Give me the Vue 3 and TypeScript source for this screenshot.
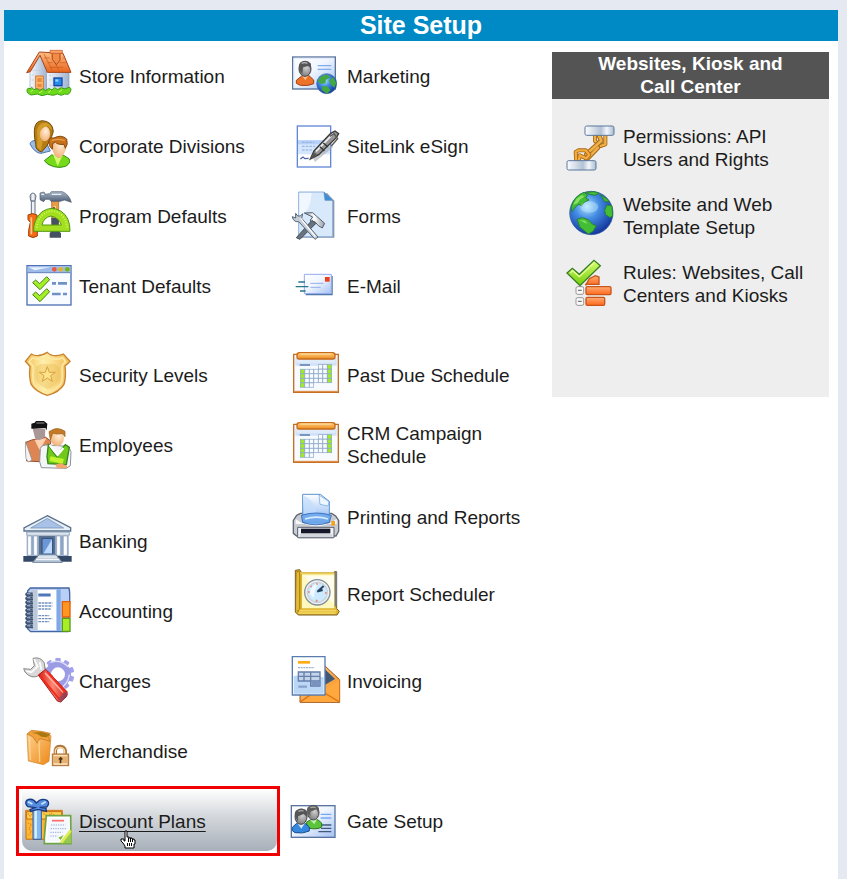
<script setup lang="ts">
interface Item {
  label: string
  icon: string
  active?: boolean
}

interface Group {
  space: 'none' | 'xs' | 'sm' | 'md' | 'lg' | 'xl' | 'xxl'
  items: Item[]
}

const columns: Group[][] = [
  [
    {
      space: 'none',
      items: [
        { label: 'Store Information', icon: 'house' },
        { label: 'Corporate Divisions', icon: 'divisions' },
        { label: 'Program Defaults', icon: 'tools' },
        { label: 'Tenant Defaults', icon: 'checklist' },
      ],
    },
    {
      space: 'md',
      items: [
        { label: 'Security Levels', icon: 'shield' },
        { label: 'Employees', icon: 'employees' },
      ],
    },
    {
      space: 'xl',
      items: [
        { label: 'Banking', icon: 'bank' },
        { label: 'Accounting', icon: 'ledger' },
        { label: 'Charges', icon: 'wrench' },
        { label: 'Merchandise', icon: 'bag' },
        { label: 'Discount Plans', icon: 'gift', active: true },
      ],
    },
  ],
  [
    {
      space: 'none',
      items: [
        { label: 'Marketing', icon: 'card' },
        { label: 'SiteLink eSign', icon: 'sign' },
        { label: 'Forms', icon: 'forms' },
        { label: 'E-Mail', icon: 'mail' },
      ],
    },
    {
      space: 'md',
      items: [
        { label: 'Past Due Schedule', icon: 'calendar' },
        { label: 'CRM Campaign Schedule', icon: 'calendar' },
      ],
    },
    { space: 'xs', items: [{ label: 'Printing and Reports', icon: 'printer' }] },
    { space: 'sm', items: [{ label: 'Report Scheduler', icon: 'clock' }] },
    { space: 'lg', items: [{ label: 'Invoicing', icon: 'invoice' }] },
    { space: 'xxl', items: [{ label: 'Gate Setup', icon: 'gate' }] },
  ],
]

const webItems: Item[] = [
  { label: 'Permissions: API Users and Rights', icon: 'chain' },
  { label: 'Website and Web Template Setup', icon: 'globe' },
  { label: 'Rules: Websites, Call Centers and Kiosks', icon: 'rules' },
]

const dayColumns = [0, 1, 2, 3, 4, 5, 6]
const calendarCells = [0, 1, 2, 3, 4].flatMap((row) =>
  dayColumns
    .filter((col) => (row === 0 ? col > 3 : row === 4 ? col < 3 : true))
    .map((col) => ({
      x: 91 + col * 13.5,
      y: 104 + row * 13.7,
      weekend: (col === 0 && row > 0) || col === 6,
    })),
)
const gearTeeth = [0, 36, 72, 108, 144, 180, 216, 252, 288, 324]
const rings = [280, 292, 304, 316, 328, 340, 352, 364, 376]
</script>

<template>
  <div class="page">
    <svg class="sprite" aria-hidden="true">
      <defs>
        <linearGradient id="roof" x1="0" y1="0" x2="0" y2="1"><stop offset="0" stop-color="#ffbd83" /><stop offset="1" stop-color="#e8641b" /></linearGradient>
        <linearGradient id="wall" x1="0" y1="0" x2="1" y2="0"><stop offset="0" stop-color="#f5f8fc" /><stop offset="1" stop-color="#9fb3d0" /></linearGradient>
        <linearGradient id="paper" x1="0" y1="0" x2="1" y2="1"><stop offset="0" stop-color="#ffffff" /><stop offset=".45" stop-color="#f1f6ff" /><stop offset="1" stop-color="#a5c2f3" /></linearGradient>
        <linearGradient id="gold" x1="0" y1="0" x2="1" y2="0"><stop offset="0" stop-color="#f1bd55" /><stop offset=".4" stop-color="#fff0ae" /><stop offset="1" stop-color="#f2bc55" /></linearGradient>
        <linearGradient id="orange" x1="0" y1="0" x2="1" y2="1"><stop offset="0" stop-color="#ffd391" /><stop offset="1" stop-color="#ee8715" /></linearGradient>
        <linearGradient id="steel" x1="0" y1="0" x2="0" y2="1"><stop offset="0" stop-color="#a9b6c7" /><stop offset="1" stop-color="#4b5a72" /></linearGradient>
        <linearGradient id="silver" x1="0" y1="0" x2="1" y2="0"><stop offset="0" stop-color="#9aa3ad" /><stop offset=".5" stop-color="#ffffff" /><stop offset="1" stop-color="#9298a1" /></linearGradient>
        <linearGradient id="lime" x1="0" y1="0" x2="0" y2="1"><stop offset="0" stop-color="#d9ff72" /><stop offset="1" stop-color="#70cc08" /></linearGradient>
        <linearGradient id="red" x1="0" y1="0" x2="1" y2="0"><stop offset="0" stop-color="#d61d16" /><stop offset=".5" stop-color="#ff8872" /><stop offset="1" stop-color="#cd1710" /></linearGradient>
        <linearGradient id="bar" x1="0" y1="0" x2="1" y2="0"><stop offset="0" stop-color="#fdfefe" /><stop offset=".55" stop-color="#b2c2d6" /><stop offset=".75" stop-color="#f3f7fb" /><stop offset="1" stop-color="#a9bbd1" /></linearGradient>
        <linearGradient id="sky" x1="0" y1="0" x2="0" y2="1"><stop offset="0" stop-color="#ffffff" /><stop offset="1" stop-color="#86b4f2" /></linearGradient>
        <linearGradient id="tile" x1="0" y1="0" x2="0" y2="1"><stop offset="0" stop-color="#ffae75" /><stop offset="1" stop-color="#ff671c" /></linearGradient>
        <linearGradient id="clip" x1="0" y1="0" x2="0" y2="1"><stop offset="0" stop-color="#ffd07f" /><stop offset="1" stop-color="#ed8b20" /></linearGradient>
        <radialGradient id="ocean" cx=".4" cy=".35" r=".7"><stop offset="0" stop-color="#b7e5ff" /><stop offset=".4" stop-color="#438de4" /><stop offset="1" stop-color="#102f96" /></radialGradient>
        <radialGradient id="skin" cx=".6" cy=".35" r=".7"><stop offset="0" stop-color="#fff0d8" /><stop offset="1" stop-color="#f1ac72" /></radialGradient>
        <radialGradient id="grey" cx=".6" cy=".4" r=".7"><stop offset="0" stop-color="#d2d2d2" /><stop offset="1" stop-color="#727272" /></radialGradient>
      </defs>

      <symbol id="house" viewBox="69 156 144 144">
        <path d="M90 212 120 163 141 212V272L90 268Z" fill="url(#wall)" stroke="#95a9c4" stroke-width="2" />
        <path d="M139 216H207V264L140 272Z" fill="url(#wall)" stroke="#8296b7" stroke-width="2" />
        <path d="M97 211H131M95 225H106M131 220H139M95 240H104M131 240H139M147 226H158M190 225H204M147 240H158M190 248H204M148 256H185" stroke="#b7c6da" stroke-width="2" stroke-dasharray="6 3" />
        <path d="M118 156 189 160 213 217H142L120 166 91 215 80 218Z" fill="url(#roof)" stroke="#a84318" stroke-width="3" stroke-linejoin="round" />
        <path d="M132 174H149M143 188H158M149 202H190M188 174H195M179 188H199M132 162 158 214M166 188 178 215" stroke="#c85b22" stroke-width="2" />
        <path d="M156 158H180V181L169 194 157 178Z" fill="#f28b45" stroke="#a9481b" stroke-width="3" />
        <path d="M150 151H187V160H150Z" fill="#ff9f60" stroke="#b55325" stroke-width="2" />
        <path d="M107 228H130V269L107 266Z" fill="#ffb872" stroke="#d6752b" stroke-width="3" />
        <path d="M112 234H125V246H112ZM112 251H125V262H112Z" fill="#e88a3b" />
        <rect x="162" y="234" width="24" height="23" fill="#258bef" stroke="#1746a3" stroke-width="4" />
        <path d="M166 238H175V245H166Z" fill="#8dd8ff" />
        <path d="M81 271Q82 261 91 267L95 262 102 269 111 266 119 272 128 266 137 272 146 265 156 270 164 263 173 269 184 263 195 267 207 262Q216 264 211 275 207 286 194 282L184 286 172 282 160 286 142 283 126 287 112 282 94 285Q81 282 81 271Z" fill="#6cda1b" stroke="#3e9b16" stroke-width="3" />
        <path d="M92 275 100 270M117 279 127 273M145 278 153 271M176 276 186 270" stroke="#c1fa66" stroke-width="3" />
      </symbol>

      <symbol id="divisions" viewBox="69 366 144 144">
        <path d="M90 432Q91 423 106 421L140 430 151 453 123 460Q105 460 90 432Z" fill="#9bbce6" stroke="#4f76ad" stroke-width="3" />
        <path d="M118 364Q104 369 103 392 102 410 107 433 106 451 125 456L141 437 155 410 160 394Q157 364 127 362Z" fill="#b57c13" stroke="#704b0b" stroke-width="3" />
        <ellipse cx="134" cy="401" rx="16" ry="23" fill="url(#skin)" />
        <path d="M118 403Q122 382 143 378L156 391Q155 371 135 368 116 369 111 391 114 416 111 441L123 452 128 422Q120 417 118 403Z" fill="#d39b27" />
        <path d="M133 482 156 464 173 477 189 465 207 476Q214 489 197 499 181 505 161 500Q141 494 133 482Z" fill="#77d91c" stroke="#358f13" stroke-width="3" />
        <path d="M159 463 173 498 189 463Z" fill="#d3fb6d" />
        <path d="M156 440Q153 412 174 409 202 414 198 448 189 472 176 475 160 469 156 440Z" fill="url(#skin)" />
        <path d="M150 440Q143 422 151 414L162 414Q184 402 200 417 205 434 196 445L192 433Q172 435 166 426L158 431 157 448Z" fill="#c6711b" stroke="#874a10" stroke-width="3" />
        <path d="M155 421Q173 415 194 421" stroke="#efac51" stroke-width="3" fill="none" />
      </symbol>

      <symbol id="tools" viewBox="69 36 144 144">
        <path d="M94 63H105V104H94Z" fill="#eef2f6" stroke="#637185" stroke-width="3" />
        <path d="M92 62 90 48Q92 39 99 39 107 41 108 49L105 63Z" fill="url(#silver)" stroke="#68778b" stroke-width="3" />
        <path d="M84 105Q97 96 111 105V119L107 126 112 153V168Q99 177 86 168V151L91 127 84 119Z" fill="#f36c15" stroke="#a23f08" stroke-width="3" />
        <path d="M94 112V163" stroke="#ffc68c" stroke-width="5" />
        <path d="M155 60H176V155H155Z" fill="#e69b44" stroke="#9f5d20" stroke-width="2" />
        <path d="M154 114H177L175 151 183 160V173H149V160L156 150Z" fill="#465063" />
        <path d="M160 80H166V113" stroke="#ffd08a" stroke-width="4" />
        <path d="M120 39 132 36 136 43 149 41 154 35H187Q207 43 214 67L193 60 181 64H153L148 58 136 58 131 65 120 59Z" fill="url(#steel)" stroke="#4b596e" stroke-width="2" />
        <path d="M124 43H132M155 43H184" stroke="#e7eff7" stroke-width="4" />
        <path fill-rule="evenodd" d="M101 154Q99 119 125 96 153 76 182 93 211 111 210 154ZM126 135Q131 112 153 108 177 113 184 135Z" fill="#a3df20" stroke="#539714" stroke-width="3" />
        <path d="M110 143Q116 97 157 93 195 98 202 142" fill="none" stroke="#d9ff60" stroke-width="5" stroke-dasharray="3 5" />
      </symbol>

      <symbol id="checklist" viewBox="69 246 144 144">
        <rect x="81" y="257" width="132" height="118" fill="#f8fbff" stroke="#4f71b5" stroke-width="4" />
        <path d="M83 259H211V276H83Z" fill="#9dbbe8" />
        <path d="M86 262H151L104 271Z" fill="#e8f3ff" />
        <path d="M83 278H211" stroke="#587ab7" stroke-width="3" />
        <circle cx="163" cy="268" r="7" fill="#ee583b" /><circle cx="182" cy="268" r="7" fill="#e2b321" /><circle cx="202" cy="268" r="7" fill="#74b60d" />
        <g fill="#a1f126" stroke="#517c1b" stroke-width="3"><path d="M98 308 107 300 119 311 140 290 149 299 120 329Z" /><path d="M98 344 107 336 119 347 140 326 149 335 120 365Z" /></g>
        <path d="M156 310H168M174 310H201M156 342H182M189 342H201" stroke="#6f91c6" stroke-width="8" />
      </symbol>

      <symbol id="shield" viewBox="69 63 144 144">
        <path d="M142 67Q152 78 169 77 183 76 190 72L210 94Q205 100 195 108 199 140 192 163 179 186 142 196 106 185 94 164 86 142 90 110 83 101 76 94L94 72Q114 84 142 67Z" fill="url(#gold)" stroke="#c9822d" stroke-width="4" />
        <path d="M142 82Q160 92 189 84L197 96Q185 103 186 116 189 145 184 159 172 178 142 187 112 178 102 160 96 145 100 116 99 103 87 96L97 84Q125 92 142 82Z" fill="none" stroke="#ffe8a1" stroke-width="5" />
        <path d="M107 111Q122 98 142 103 164 98 180 111V147Q164 171 142 177 117 169 107 147Z" fill="#e9b84b" opacity=".35" />
        <path d="M142 110 148 127 166 127 152 137 157 154 142 144 127 154 132 137 118 127 136 127Z" fill="#ffe28a" stroke="#d7a340" stroke-width="3" />
      </symbol>

      <symbol id="employees" viewBox="69 273 144 144">
        <path d="M78 337 95 330 136 321 153 334 139 396 80 393Z" fill="#dd8553" stroke="#985030" stroke-width="3" />
        <path d="M77 335Q75 350 78 386L85 396 96 390Z" fill="#f3f3f3" stroke="#888" stroke-width="2" />
        <path d="M104 330 119 361 139 325Z" fill="#ffd3b1" />
        <path d="M98 296H136L135 319Q120 338 105 324Z" fill="#a99697" />
        <path d="M94 296V281L104 278 108 273H132L142 281 140 301 136 294 101 296Z" fill="#111" />
        <path d="M109 279H133" stroke="#777" stroke-width="4" />
        <path d="M121 355Q125 344 144 345L205 349 213 365 211 407 199 415 124 413 119 395Z" fill="#f4f5f8" stroke="#8f929b" stroke-width="3" />
        <path d="M145 344 160 366 172 382 186 355 196 344 208 352 199 404 144 401 141 380Z" fill="#72ca18" stroke="#33871d" stroke-width="4" />
        <path d="M149 345 163 363 173 375 190 354" fill="none" stroke="#fff" stroke-width="7" />
        <path d="M150 386 190 394" stroke="#c0f52d" stroke-width="15" />
        <ellipse cx="172" cy="325" rx="20" ry="23" fill="url(#skin)" />
        <path d="M151 330 147 305 156 300Q175 290 195 304L195 320 188 311 170 312 158 309Z" fill="#c57a25" stroke="#945c17" stroke-width="2" />
        <path d="M166 404 181 399 201 407V415H171Z" fill="#f4a66f" />
      </symbol>

      <symbol id="bank" viewBox="69 51 144 144">
        <path d="M142 47 212 83V93H72V84Z" fill="#e7eff7" stroke="#59718f" stroke-width="4" />
        <path d="M142 55 191 84H92Z" fill="#a8c2e7" stroke="#6b87ae" stroke-width="2" />
        <path d="M80 96H208V106H80Z" fill="#dbe5ef" stroke="#6f87a2" stroke-width="2" />
        <path d="M80 108H206V167H80Z" fill="#8ba6c7" />
        <path d="M83 108H94V166H83ZM101 108H112V166H101ZM170 108H181V166H170ZM190 108H202V166H190Z" fill="#fff" stroke="#90a5bd" stroke-width="2" />
        <path d="M117 108H165V165H117Z" fill="#59718f" />
        <path d="M126 115H158V163H126Z" fill="#6d96d7" stroke="#304c75" stroke-width="3" />
        <path d="M156 118V160H131Z" fill="#bddbff" />
        <path d="M70 168H215V185H70Z" fill="#344967" />
        <path d="M118 163H166L187 187H98Z" fill="#becbda" stroke="#69809b" stroke-width="3" />
        <path d="M114 171H171M108 178H178" stroke="#fff" stroke-width="3" />
      </symbol>

      <symbol id="ledger" viewBox="69 261 144 144">
        <path d="M91 264H207Q210 275 209 303L204 395H92L83 386V272Z" fill="#b9cff5" stroke="#4265a0" stroke-width="4" />
        <path d="M91 270H169V390H91Z" fill="#fff" />
        <path d="M91 270H113V390H91Z" fill="#bcc9da" />
        <path d="M170 268H182V393H170Z" fill="#80a8e9" />
        <path d="M187 305H210V351H187Z" fill="#ff9620" stroke="#e45d0c" stroke-width="4" />
        <path d="M187 355H210V394H187Z" fill="#a7ee23" stroke="#5b9821" stroke-width="4" />
        <path d="M115 285H152" stroke="#4e78bb" stroke-width="9" />
        <path d="M115 309H157M115 318H157M115 327H152M115 347H148M115 356H157M115 365H148" stroke="#7290bd" stroke-width="4" stroke-dasharray="8 2" />
        <g v-for="y in rings" :key="y"><path :d="`M98 ${y}H80Q76 ${y + 3} 80 ${y + 6}H99`" fill="none" stroke="#3e5171" stroke-width="5" /><path :d="`M81 ${y + 1}H91`" stroke="#dce5f2" stroke-width="2" /></g>
      </symbol>

      <symbol id="wrench" viewBox="69 51 144 144">
        <g fill="#a2a2ec"><rect v-for="a in gearTeeth" :key="a" x="166" y="54" width="16" height="15" rx="3" :transform="`rotate(${a} 174 103)`" /></g>
        <circle cx="174" cy="103" r="30" fill="none" stroke="#9c9ce5" stroke-width="18" />
        <path d="M151 67Q181 57 204 80M208 104Q204 132 184 142" fill="none" stroke="#e1e1fb" stroke-width="4" />
        <path d="M99 55Q122 49 133 69L135 88 159 109 143 127 120 105Q94 120 75 96L71 86 92 88 103 77Z" fill="#d9d9d9" stroke="#888" stroke-width="3" />
        <path d="M102 57 113 80 94 97 79 93M119 66 124 89" fill="none" stroke="#fff" stroke-width="5" />
        <path d="M115 105 137 88 201 155Q203 164 199 170L182 186 172 183Z" fill="url(#red)" stroke="#a91616" stroke-width="3" />
        <path d="M135 99 190 157" stroke="#ffb0a0" stroke-width="5" /><path d="M121 109 179 179M143 96 200 162" stroke="#ef2b20" stroke-width="6" />
        <path d="M175 175 198 154 203 165 184 187Z" fill="#7e486a" opacity=".65" />
      </symbol>

      <symbol id="bag" viewBox="69 261 144 144">
        <path d="M81 282 110 277 153 287 147 364 130 374 85 363Z" fill="url(#orange)" stroke="#d18328" stroke-width="2" />
        <path d="M81 282 94 271 124 274 151 280 145 289 150 304 134 299 119 296 112 310 98 290Z" fill="#f1a139" stroke="#bd731e" stroke-width="2" />
        <path d="M94 278 112 282 124 290 140 292 150 283 125 276Z" fill="#a97712" />
        <path d="M88 293 91 360M117 302 119 366" stroke="#ffe2a3" stroke-width="4" opacity=".7" />
        <path d="M166 344V331Q168 319 181 319 194 320 196 332V344" fill="none" stroke="#a9753a" stroke-width="10" />
        <path d="M166 344V331Q168 322 181 322 192 323 194 333V344" fill="none" stroke="#ffd9a4" stroke-width="4" />
        <rect x="157" y="342" width="49" height="35" fill="#e6b274" stroke="#a96f35" stroke-width="3" />
        <path d="M161 347H201M161 372H201" stroke="#ffe3b9" stroke-width="4" />
        <path d="M182 350 189 357 184 360V370H179V360L175 357Z" fill="#4b3013" />
      </symbol>

      <symbol id="gift" viewBox="69 471 144 144">
        <path d="M77 511H187V528L179 598H78Z" fill="#f7ad24" stroke="#cf751a" stroke-width="3" />
        <path d="M80 515H185V537H80Z" fill="#ffd251" stroke="#c66c16" stroke-width="3" />
        <path d="M82 541H130V594H82Z" fill="#ffbb37" />
        <path d="M84 520 91 528 98 519 107 528 116 519M84 549 95 554 86 565 94 575 85 587M130 521 143 528 153 520 168 528" fill="none" stroke="#ef8622" stroke-width="4" stroke-dasharray="4 3" />
        <path d="M99 508H124V598H99Z" fill="#83b9f1" stroke="#315ba5" stroke-width="3" />
        <path d="M107 512V595" stroke="#d9f2ff" stroke-width="7" />
        <path d="M109 489Q97 472 80 481 73 490 84 500L105 503 90 509 92 514 110 509 119 509 139 514 138 505 119 502 140 501Q151 490 141 481 123 473 109 489Z" fill="#568dde" stroke="#183a83" stroke-width="4" />
        <path d="M84 485 97 492M137 485 124 493" stroke="#c5e6ff" stroke-width="5" />
        <path d="M139 527H212L213 611H133V594Z" fill="#fff" stroke="#6fa447" stroke-width="5" />
        <path d="M146 534H206V603H141Z" fill="#f5f8ff" />
        <path d="M156 542H192" stroke="#fb6b68" stroke-width="5" />
        <path d="M153 555H196M152 566H198M151 577H187M151 588H173" stroke="#9aadd5" stroke-width="3" stroke-dasharray="4 3" />
        <path d="M180 610 214 566V610Z" fill="#95c84d" /><path d="M184 608 212 572" stroke="#deec51" stroke-width="8" /><path d="M175 593 182 600 191 585Z" fill="#7cb92e" />
      </symbol>

      <symbol id="card" viewBox="63 36 144 144">
        <rect x="68" y="51" width="128" height="96" fill="url(#paper)" stroke="#58739c" stroke-width="4" />
        <path d="M72 143V55H192" fill="none" stroke="#dfeafb" stroke-width="3" />
        <path d="M143 77H184M143 88H184" stroke="#80acf0" stroke-width="4" />
        <path d="M79 121 95 108 117 107 131 120V131Q115 139 91 136L79 130Z" fill="#ee7128" stroke="#9e4012" stroke-width="3" />
        <path d="M96 108 106 121 116 106" fill="#ffbd83" />
        <ellipse cx="105" cy="87" rx="18" ry="22" fill="url(#grey)" stroke="#444" stroke-width="3" />
        <path d="M88 90Q82 70 97 64 112 58 123 71V86L115 78 99 82 97 101Z" fill="#565656" />
        <path d="M95 70Q104 66 112 70" stroke="#bbb" stroke-width="4" fill="none" />
        <circle cx="170" cy="131" r="30" fill="url(#ocean)" stroke="#41659d" stroke-width="2" />
        <path d="M143 123 154 108 172 104 181 112 168 119 166 130 153 132ZM176 122 190 112 199 129 193 143 184 135ZM157 138 172 139 182 151 171 161 155 150Z" fill="#43a742" />
      </symbol>

      <symbol id="sign" viewBox="63 246 144 144">
        <rect x="82" y="258" width="100" height="123" fill="#fff" stroke="#6287d9" stroke-width="4" />
        <path d="M84 300H180V343H84Z" fill="#d5e7ff" /><path d="M84 301H180V313H84Z" fill="#b6d2f8" />
        <path d="M96 307H132M96 319H136M96 330H129" stroke="#91aed5" stroke-width="3" stroke-dasharray="8 3" />
        <path d="M91 357 99 351 105 356 116 355" stroke="#4864ad" stroke-width="4" fill="none" />
        <path d="M128 353 184 314 190 321 135 366Z" fill="#a8aaae" opacity=".6" />
        <path d="M121 357 132 333 182 280 195 273 206 281 199 293 146 344Z" fill="#969696" stroke="#383838" stroke-width="4" />
        <path d="M138 334 190 281" stroke="#efefef" stroke-width="5" /><path d="M150 320 163 333M160 309 174 321" stroke="#333" stroke-width="4" />
        <path d="M180 289 192 281 203 296 184 318" fill="none" stroke="#555" stroke-width="4" /><path d="M121 357 131 336 143 345Z" fill="#565656" />
      </symbol>

      <symbol id="forms" viewBox="63 36 144 144">
        <path d="M91 40H172L193 62V173H91Z" fill="#8590a4" />
        <path d="M86 36H162L188 60V170H86Z" fill="#d8e9fc" stroke="#90b2df" stroke-width="3" />
        <path d="M88 39H125Q123 90 88 113Z" fill="#fff" opacity=".65" />
        <path d="M162 37 188 61H165Z" fill="#3b91d9" stroke="#5784b4" stroke-width="2" />
        <path d="M103 99 128 98 139 108 164 130 157 144 145 137 134 124 123 128 121 120 128 111Z" fill="url(#silver)" stroke="#536071" stroke-width="3" />
        <path d="M126 121 137 131 90 178 79 173Z" fill="#69737e" stroke="#434e5b" stroke-width="3" />
        <path d="M77 100 83 108 91 108 98 101 95 115 144 171 135 178 86 125Q70 127 67 110L77 114Z" fill="#c8ced8" stroke="#526275" stroke-width="3" />
        <path d="M92 115 136 169" stroke="#fff" stroke-width="4" />
      </symbol>

      <symbol id="mail" viewBox="63 246 144 144">
        <path d="M108 288H188V346H107Z" fill="#44709f" />
        <path d="M103 283H184V341H103Z" fill="url(#paper)" stroke="#96aaf0" stroke-width="3" />
        <path d="M121 310H160M121 322H152" stroke="#94afea" stroke-width="3" />
        <rect x="165" y="291" width="14" height="14" fill="#ef3c1a" />
        <path d="M85 306H105M77 320H115M90 333H107" stroke="#23788c" stroke-width="4" />
      </symbol>

      <symbol id="calendar" viewBox="63 63 144 144">
        <path d="M71 73H205V187H71Z" fill="#f7faff" stroke="#c76e20" stroke-width="4" />
        <path d="M76 84H200V107H76Z" fill="#c5d9f5" opacity=".75" />
        <path d="M79 94H196" stroke="#e1ecfb" stroke-width="8" />
        <rect x="81" y="68" width="114" height="19" rx="7" fill="url(#clip)" stroke="#c86b18" stroke-width="4" />
        <path d="M91 72H185" stroke="#ffe1a9" stroke-width="3" />
        <path d="M89 105H120" stroke="#7996c0" stroke-width="6" />
        <rect v-for="c in calendarCells" :key="`${c.x}-${c.y}`" :x="c.x" :y="c.y" width="13" height="13" :fill="c.weekend ? '#9dec22' : '#f9fcff'" stroke="#8ba5c6" stroke-width="2" />
        <path d="M73 184H203" stroke="#d98235" stroke-width="3" />
      </symbol>

      <symbol id="printer" viewBox="63 39 144 144">
        <path d="M80 106 91 100H185L197 108 206 121V154L198 168H80L70 160V121Z" fill="#c8cbd1" stroke="#606672" stroke-width="4" />
        <path d="M77 117Q102 137 139 139 176 137 200 116V132H77Z" fill="#f5f7f9" />
        <path d="M98 43H151L178 64V127H98Z" fill="url(#sky)" stroke="#5a92d0" stroke-width="3" />
        <path d="M147 45 177 65 174 78 150 73Z" fill="#eef7ff" stroke="#69a0db" stroke-width="2" />
        <path d="M102 47Q134 60 139 101H102Z" fill="#c3ddfc" opacity=".7" />
        <path d="M94 106Q139 92 184 106L178 127Q138 142 98 127Z" fill="#6ba7ed" opacity=".85" stroke="#2d66b9" stroke-width="3" />
        <path d="M105 117Q140 106 174 117" fill="none" stroke="#d7ecff" stroke-width="5" />
        <path d="M83 142H192V173H83Z" fill="#f0f2f5" stroke="#5b606b" stroke-width="3" />
        <path d="M93 146H181V160H93Z" fill="#15182b" /><path d="M89 162H187V172H89Z" fill="#d3d6dc" /><path d="M86 173H190" stroke="#777d89" stroke-width="4" />
        <rect x="184" y="123" width="11" height="14" fill="#f6a31b" />
      </symbol>

      <symbol id="clock" viewBox="63 270 144 144">
        <path d="M76 271 89 269 95 278H193V275H200V386L208 394 201 405H85L76 396Z" fill="#ddb42e" stroke="#795e1f" stroke-width="3" />
        <path d="M79 273 91 274V387L82 399Z" fill="#b68510" /><path d="M84 277V389" stroke="#f6d55e" stroke-width="4" />
        <path d="M96 283H193V385H96Z" fill="#fff9be" /><path d="M98 287H192V371Z" fill="#fff" opacity=".7" />
        <path d="M91 279H193M88 392H199M86 399H197" stroke="#f5d761" stroke-width="5" />
        <path d="M194 276H201V375L194 381Z" fill="#777b86" />
        <circle cx="142" cy="337" r="38" fill="#eef2f4" stroke="#83909b" stroke-width="4" /><circle cx="142" cy="337" r="30" fill="#cceaff" stroke="#cbd1d7" stroke-width="4" />
        <path d="M120 342Q120 315 146 310 133 325 132 355Z" fill="#fff" opacity=".7" />
        <path d="M161 318 142 335 158 330" fill="none" stroke="#27455f" stroke-width="6" />
        <path d="M114 336H119M165 339H170M141 310V314M140 359V365M122 318 125 321" stroke="#e78368" stroke-width="5" />
      </symbol>

      <symbol id="invoice" viewBox="63 51 144 144">
        <path d="M90 139 148 83 165 78 209 119V187H90Z" fill="url(#orange)" stroke="#a75312" stroke-width="3" />
        <path d="M165 88 195 117 164 135Z" fill="#415976" /><path d="M91 185 142 136 161 149 208 118V186Z" fill="#ffa83d" />
        <path d="M92 185 145 148 207 185" fill="none" stroke="#df7618" stroke-width="4" />
        <path d="M67 50H165V165H67Z" fill="#fff" stroke="#597db0" stroke-width="4" />
        <path d="M71 108Q115 100 161 112V161H71Z" fill="#bad7f6" /><path d="M84 67H120" stroke="#ffab15" stroke-width="8" />
        <path d="M84 83H133" stroke="#9fb0cb" stroke-width="4" stroke-dasharray="6 2" />
        <path d="M85 96H150V123H85ZM85 109H150M102 96V123M122 96V138H150V123H122" fill="#c3d4e9" stroke="#637faa" stroke-width="4" />
        <path d="M124 124H150V137H124Z" fill="#7992be" /><path d="M85 140H111" stroke="#8ca4cc" stroke-width="7" />
      </symbol>

      <symbol id="gate" viewBox="63 471 144 144">
        <rect x="64" y="497" width="131" height="95" fill="url(#paper)" stroke="#58749f" stroke-width="4" />
        <path d="M152 523H184M152 534H184" stroke="#78a8f4" stroke-width="4" /><path d="M156 555H184M153 565H184M145 575H184" stroke="#415a7b" stroke-width="4" />
        <path d="M109 547 122 539 143 539 155 549V561Q141 570 114 564Z" fill="#5cc438" stroke="#287419" stroke-width="3" />
        <path d="M120 539 133 553 141 537" fill="#c6efb6" />
        <ellipse cx="130" cy="518" rx="17" ry="22" fill="url(#grey)" stroke="#484848" stroke-width="3" />
        <path d="M112 515Q107 500 123 497 140 492 147 505V522L139 508 121 515V529Z" fill="#5d5d5d" />
        <path d="M67 562 80 550 104 549 118 561V573Q99 582 75 578L67 572Z" fill="#3588dd" stroke="#17508f" stroke-width="3" />
        <path d="M82 550 94 566 105 549" fill="#d1e6ff" />
        <ellipse cx="93" cy="530" rx="18" ry="23" fill="url(#grey)" stroke="#454545" stroke-width="3" />
        <path d="M76 530Q70 512 86 508 105 502 112 516V532L101 522 84 529V544Z" fill="#555" />
        <path d="M85 514Q94 510 101 513M121 503Q130 500 137 503" stroke="#aaa" stroke-width="4" fill="none" />
      </symbol>

      <symbol id="chain" viewBox="81 372 144 144">
        <g fill="none" stroke-linecap="round" stroke-linejoin="round"><path d="M165 401V423L181 438 196 433V402" stroke="#a46415" stroke-width="12" /><path d="M165 401V423L181 438 196 433V402" stroke="#f1b347" stroke-width="7" /><path d="M177 407 184 422 139 463M174 443 140 478" stroke="#a46415" stroke-width="14" /><path d="M177 407 184 422 139 463M174 443 140 478" stroke="#eeb14a" stroke-width="8" /><path d="M109 487 107 456 115 451 137 451 148 464 139 475 119 466 116 487" stroke="#ab6614" stroke-width="12" /><path d="M109 487 107 456 115 451 137 451 148 464 139 475 119 466 116 487" stroke="#f0ad3d" stroke-width="7" /></g>
        <g fill="url(#bar)" stroke="#5b779d" stroke-width="3"><rect x="135" y="378" width="87" height="28" rx="5" /><rect x="81" y="482" width="87" height="28" rx="5" /></g>
      </symbol>

      <symbol id="globe" viewBox="81 36 144 144">
        <circle cx="154" cy="99" r="65" fill="url(#ocean)" stroke="#2457a2" stroke-width="2" />
        <path d="M95 77Q104 47 132 37L143 45 137 54 147 60 134 66 124 78 117 72 105 82 95 96ZM137 37 162 35 177 40 165 46 149 43ZM181 44 202 58 208 66 194 64ZM216 78 218 109 209 112 197 104 194 91 201 75ZM111 118 127 113 145 119 158 133 169 137 159 154 145 162 133 152 120 142Z" fill="#43bd36" stroke="#28823a" stroke-width="3" />
        <path d="M99 74 110 56 126 45 133 50 121 58 112 70ZM119 121 136 122 142 132Z" fill="#a1ed71" opacity=".75" />
        <ellipse cx="148" cy="81" rx="27" ry="17" fill="#d6f5ff" opacity=".35" />
      </symbol>

      <symbol id="rules" viewBox="81 240 144 144">
        <path d="M137 316 148 296 166 287 177 291V313H137Z" fill="url(#tile)" stroke="#c4551b" stroke-width="4" />
        <rect x="138" y="320" width="75" height="24" rx="4" fill="url(#tile)" stroke="#ca5319" stroke-width="4" /><rect x="138" y="352" width="56" height="24" rx="4" fill="url(#tile)" stroke="#ca5319" stroke-width="4" />
        <g fill="#f8f8f8" stroke="#969696" stroke-width="3"><rect x="108" y="320" width="23" height="23" rx="5" /><rect x="108" y="353" width="23" height="23" rx="5" /></g><path d="M114 331H125M114 364H125" stroke="#777" stroke-width="4" />
        <path d="M81 279 97 265 118 283 162 241 181 257 120 317Z" fill="url(#lime)" stroke="#397e27" stroke-width="4" />
        <path d="M91 279 98 272 118 290 162 249" fill="none" stroke="#e6ff9a" stroke-width="4" />
      </symbol>
    </svg>

    <main class="panel">
      <h1 class="title">Site Setup</h1>
      <div class="content">
        <nav v-for="(column, c) in columns" :key="c" class="column" :aria-label="c === 0 ? 'Store' : 'Operations'">
          <ul v-for="(group, g) in column" :key="g" class="group" :class="`space-${group.space}`">
            <li v-for="item in group.items" :key="item.label">
              <a class="item" :class="{ active: item.active }" href="#">
                <svg class="icon" aria-hidden="true"><use :href="`#${item.icon}`" /></svg>
                <span class="label">{{ item.label }}</span>
                <svg v-if="item.active" class="pointer" viewBox="0 0 16 19" aria-hidden="true">
                  <path d="M5 1H7V7H9V8H12V9H14V10H15V14H14V18H5V16L3 13 1 11V9H4V11H5Z" fill="#fff" stroke="#000" stroke-width="1" />
                  <path d="M8.5 8V12M10.5 8V12M12.5 9V12M7.5 13V16M9.5 13V16M11.5 13V16" stroke="#000" stroke-width="1" />
                </svg>
              </a>
            </li>
          </ul>
        </nav>

        <section class="web" aria-labelledby="web-title">
          <h2 id="web-title" class="web-title">Websites, Kiosk and Call Center</h2>
          <ul class="web-list">
            <li v-for="item in webItems" :key="item.label">
              <a class="item web-item" href="#">
                <svg class="icon" aria-hidden="true"><use :href="`#${item.icon}`" /></svg>
                <span class="label">{{ item.label }}</span>
              </a>
            </li>
          </ul>
        </section>
      </div>
    </main>
  </div>
</template>

<style>
body {
  background: #e5eaf2;
}
</style>

<style scoped>
.page {
  box-sizing: border-box;
  min-height: 100vh;
  padding: 10px 9px 0 4px;
  display: flex;
  flex-direction: column;
  color: #1c1c1c;
  font-family: "Liberation Sans", Arial, sans-serif;
  font-size: 19px;
  line-height: 23px;
}

.sprite {
  position: absolute;
  width: 0;
  height: 0;
}

symbol {
  overflow: visible;
}

.panel {
  flex: 1;
  background: #fff;
}

.title {
  margin: 0;
  background: #008ac5;
  color: #fff;
  font-size: 25px;
  line-height: 31px;
  text-align: center;
}

.content {
  display: grid;
  grid-template-columns: 264fr 264fr 277fr;
  column-gap: 4px;
  align-items: start;
  padding: 0 9px 0 12px;
}

ul {
  margin: 0;
  padding: 0;
  list-style: none;
}

.space-xs { margin-top: 2px; }
.space-sm { margin-top: 7px; }
.space-lg { margin-top: 17px; }
.space-md { margin-top: 19px; }
.space-xl { margin-top: 26px; }
.space-xxl { margin-top: 70px; }

.item {
  position: relative;
  box-sizing: border-box;
  display: flex;
  align-items: center;
  gap: 8px;
  min-height: 70px;
  padding: 0 7px;
  color: inherit;
  text-decoration: none;
}

.icon {
  flex: none;
  width: 48px;
  height: 48px;
  overflow: visible;
}

.active {
  isolation: isolate;
  padding: 0 4px;
  border: 3px solid #f00000;
}

.active::before {
  content: "";
  position: absolute;
  z-index: -1;
  inset: 0 0 2px 3px;
  border-radius: 0 0 10px 10px;
  background: linear-gradient(#fff, #d3d7db 45%, #a7afb9);
}

.active .label {
  text-decoration: underline;
  text-decoration-thickness: 1px;
  text-underline-offset: 3px;
}

.pointer {
  position: absolute;
  left: 101px;
  top: 41px;
  width: 16px;
  height: 19px;
}

.web {
  min-height: 345px;
  margin-top: 11px;
  background: #eee;
}

.web-title {
  margin: 0;
  padding: 0 40px 1px;
  background: #545454;
  color: #fff;
  font-size: 19px;
  line-height: 23px;
  text-align: center;
}

.web-list {
  padding: 15px 8px 0;
}

.web-item {
  min-height: 68px;
}
</style>
